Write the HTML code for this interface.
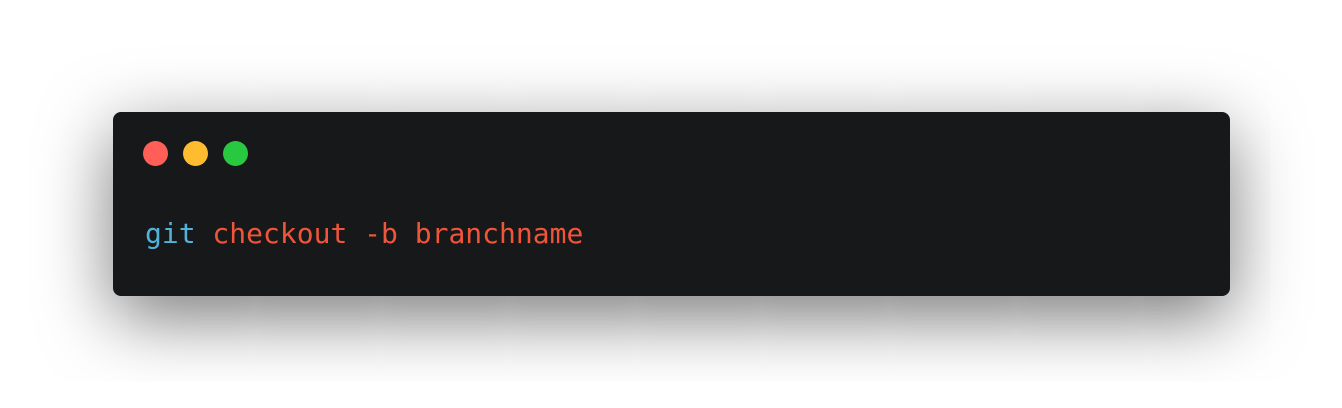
<!DOCTYPE html>
<html><head><meta charset="utf-8"><style>
html,body{margin:0;padding:0;width:1342px;height:408px;background:#fff;overflow:hidden}
.win{position:absolute;left:113px;top:112px;width:1117px;height:184px;background:#171819;border-radius:8px;box-shadow:0 20px 72px rgba(0,0,0,0.55)}
.dot{position:absolute;top:29px;width:25px;height:25px;border-radius:50%}
.code{position:absolute;left:32px;top:104px;font-family:"DejaVu Sans Mono","Liberation Mono",monospace;font-size:28px;line-height:36px;white-space:pre;color:#f0553a}
.b{color:#52b3da}
</style></head><body>
<div class="win">
<div class="dot" style="left:29.5px;background:#ff5f57"></div>
<div class="dot" style="left:69.5px;background:#febc2e"></div>
<div class="dot" style="left:109.5px;background:#28c840"></div>
<div class="code"><span class="b">git</span> checkout -b branchname</div>
</div>
</body></html>
